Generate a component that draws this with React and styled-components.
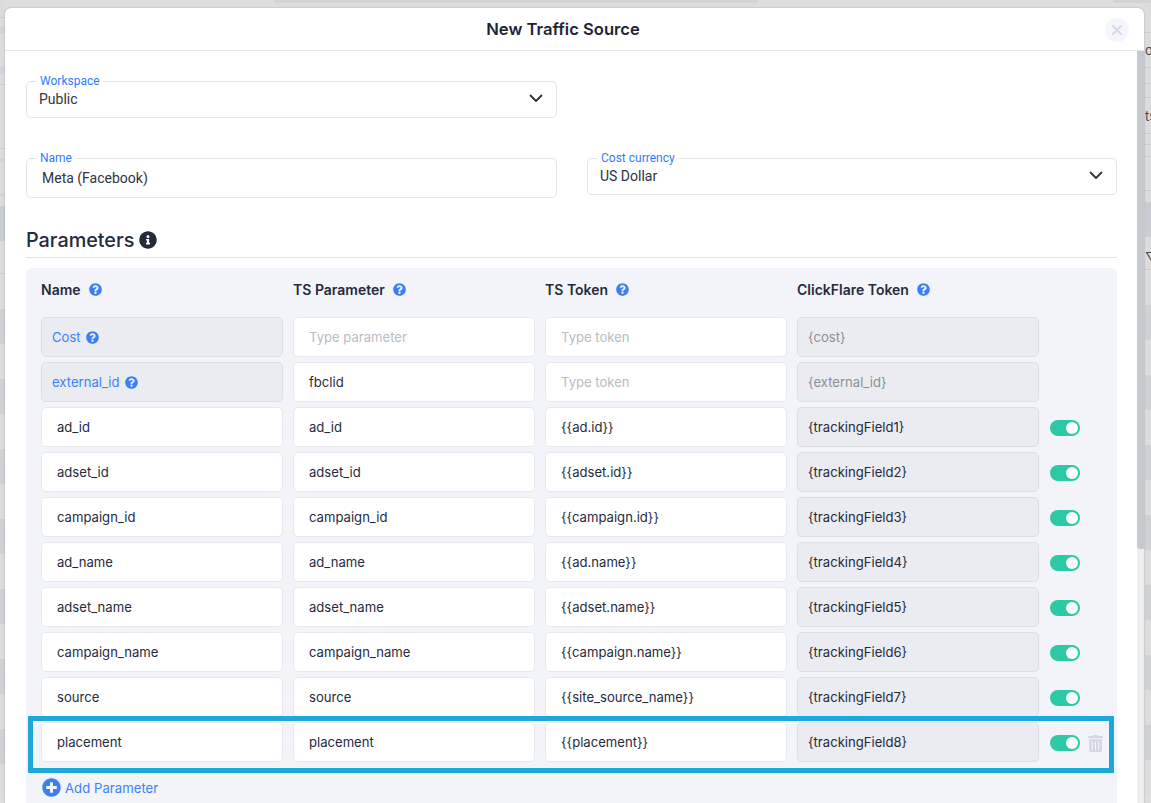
import React from "react";
import styled, { createGlobalStyle } from "styled-components";
import { FaQuestionCircle, FaInfoCircle, FaTrashAlt, FaPlusCircle } from "react-icons/fa";

const Global = createGlobalStyle`
  html, body { margin: 0; padding: 0; height: 100%; overflow: hidden; background: #dedede; }
  * { box-sizing: border-box; }
  body { font-family: Inter, "Noto Sans", sans-serif; color: #252b3b; }
`;

const Page = styled.div`
  position: relative;
  height: 803px;
  padding: 8px 7px 0 5px;
  overflow: hidden;
`;
const Backdrop = styled.div`
  position: absolute;
  inset: 0;
  display: flex;
  justify-content: space-between;
`;
const Strip = styled.div`
  width: 6px;
  overflow: hidden;
`;
const Band = styled.div`
  height: ${p => p.$h}px;
  background: ${p => p.$c || "#dcdcdc"};
  font-size: 13px;
  line-height: ${p => p.$h}px;
  color: #44474d;
  white-space: nowrap;
`;
const TopPill = styled.div`
  position: absolute;
  top: 0;
  left: ${p => p.$left}px;
  width: ${p => p.$w}px;
  height: 3px;
  background: #d3d3d7;
  border-radius: 0 0 6px 6px;
`;
const Modal = styled.div`
  position: relative;
  height: 795px;
  background: #fff;
  border-radius: 6px 6px 0 0;
  display: flex;
  flex-direction: column;
  box-shadow: 0 0 2px rgba(0,0,0,.28);
`;
const Header = styled.header`
  height: 43px;
  flex: none;
  border-bottom: 1px solid #e4e5e7;
  display: flex;
  align-items: center;
  justify-content: center;
  padding-right: 23px;
  position: relative;
`;
const Title = styled.h1`
  margin: 0;
  font-size: 16.6px;
  font-weight: 600;
  color: #1f2537;
`;
const Close = styled.button`
  position: absolute;
  right: 15px;
  top: 10px;
  width: 24px;
  height: 24px;
  border: 0;
  padding: 0;
  border-radius: 50%;
  background: #f5f6fb;
  display: grid;
  place-items: center;
  color: #d6d9e5;
`;
const Scroller = styled.div`
  flex: 1;
  display: flex;
  min-height: 0;
`;
const Body = styled.div`
  flex: 1;
  min-width: 0;
  padding: 30px 20px 0 21px;
`;
const ScrollTrack = styled.div`
  width: 7px;
  flex: none;
  background: #eeeff1;
`;
const ScrollThumb = styled.div`
  width: 8px;
  height: 498px;
  background: #c5c8cc;
  border-radius: 0 0 3px 3px;
`;
const FormGrid = styled.div`
  display: grid;
  grid-template-columns: 531px 530px;
  column-gap: 30px;
  align-items: start;
`;
const FieldBox = styled.div`
  position: relative;
  height: ${p => p.$h}px;
  margin-bottom: ${p => p.$mb || 0}px;
  border: 1px solid #e2e4e8;
  border-radius: 5px;
  display: flex;
  align-items: center;
  justify-content: space-between;
  padding: ${p => p.$pad};
  font-family: Roboto, Inter, sans-serif;
  font-size: 14px;
  color: #30343f;
`;
const FieldLabel = styled.span`
  position: absolute;
  left: 9px;
  top: -7px;
  padding: 0 4px;
  background: #fff;
  font-size: 12px;
  line-height: 13px;
  color: #2f7bff;
`;
const Section = styled.h2`
  margin: 22px 0 0;
  height: 38px;
  border-bottom: 1px solid #e2e4e8;
  display: flex;
  align-items: center;
  gap: 5px;
  font-size: 19.8px;
  font-weight: 500;
  color: #252b3b;
  padding-top: 2px;
`;
const Panel = styled.section`
  position: relative;
  margin-top: 10px;
  background: #f3f4fa;
  border-radius: 6px 6px 0 0;
  padding: 0 15px;
  height: 600px;
`;
const Grid = styled.div`
  display: grid;
  grid-template-columns: repeat(4, 242px) 1fr;
  column-gap: 10px;
  row-gap: 5px;
`;
const Head = styled.div`
  height: 44px;
  display: flex;
  align-items: center;
  gap: 8px;
  font-size: 14px;
  font-weight: 600;
  color: #252b3b;
  padding-bottom: 1px;
`;
const HelpIcon = styled(FaQuestionCircle)`
  width: 13px;
  height: 13px;
  flex: none;
  color: #3b7ff5;
`;
const InfoIcon = styled(FaInfoCircle)`
  width: 18px;
  height: 18px;
  color: #252b3b;
`;
const TrashIcon = styled(FaTrashAlt)`
  width: 15px;
  height: 17px;
  color: #d3d6e6;
`;
const PlusIcon = styled(FaPlusCircle)`
  width: 19px;
  height: 19px;
  color: #3b7ff5;
`;
const Cell = styled.div`
  height: 40px;
  border-radius: 5px;
  border: 1px solid ${p => (p.$disabled ? "#dcdee3" : "#e8e9ee")};
  background: ${p => (p.$disabled ? "#eaecf1" : "#fff")};
  display: flex;
  align-items: center;
  gap: 5px;
  font-size: 13.1px;
  padding-left: ${p => p.$pl || 15}px;
  color: ${p =>
    p.$tone === "blue" ? "#3b82f6" :
    p.$tone === "ph" ? "#b9bcc4" :
    p.$tone === "muted" ? "#8b8f99" : "#252b3b"};
`;
const Controls = styled.div`
  height: 40px;
  display: flex;
  align-items: center;
  gap: 8px;
  padding: 2px 0 0 1px;
`;
const Toggle = styled.span`
  width: 30px;
  height: 16px;
  border-radius: 8px;
  background: #2dc9a4;
  display: flex;
  justify-content: flex-end;
  align-items: center;
  padding-right: 2px;
  &::after {
    content: "";
    width: 12px;
    height: 12px;
    border-radius: 50%;
    background: #fff;
  }
`;
const Highlight = styled.div`
  position: absolute;
  left: 2px;
  top: 448px;
  width: 1086px;
  height: 57px;
  border: 5px solid #1ea7db;
  pointer-events: none;
`;
const AddRow = styled.div`
  display: flex;
  align-items: center;
  gap: 4px;
  margin: 16px 0 0 1px;
  font-size: 13.2px;
  color: #3b82f6;
`;

const Chevron = () => (
  <svg width="14" height="9" viewBox="0 0 14 9" fill="none" stroke="#30343f" strokeWidth="1.8" strokeLinecap="round" strokeLinejoin="round">
    <path d="M1.5 1.5 7 7l5.5-5.5" />
  </svg>
);

const L = "#dcdcdc", LN = "#cbcbcb", B = "#cfd4e0", D = "#c9ccd2", S = "#d0d1d4";
const stripes = [];
for (let i = 0; i < 7; i++) stripes.push([35, S], [35, L]);

const leftBands = [
  [17, L], [1, LN], [9, L], [6, B], [34, L], [7, B], [10, L], [1, LN], [63, L], [1, LN],
  [10, L], [3, B], [31, L], [3, B], [10, L], [35, D], [32, L], [1, LN], [35, L],
  ...stripes,
];
const rightBands = [
  [3, "#d3d3d7"], [29, L], [1, LN], [12, L],
  [10, L, "o"],
  [12, L], [1, LN], [15, L], [1, LN], [13, L], [1, LN], [12, L],
  [12, L, "ts"],
  [11, L], [1, LN], [10, L], [1, LN], [11, L], [1, LN], [33, L], [1, LN], [11, L], [35, D],
  [15, L], [10, L, "▽"], [7, L], [1, LN], [35, L],
  ...stripes,
];

const rows = [
  ["ad_id", "{{ad.id}}"],
  ["adset_id", "{{adset.id}}"],
  ["campaign_id", "{{campaign.id}}"],
  ["ad_name", "{{ad.name}}"],
  ["adset_name", "{{adset.name}}"],
  ["campaign_name", "{{campaign.name}}"],
  ["source", "{{site_source_name}}"],
  ["placement", "{{placement}}"],
];
const heads = ["Name", "TS Parameter", "TS Token", "ClickFlare Token"];

export default function App() {
  return (
    <Page>
      <Global />
      <Backdrop>
        <Strip>
          {leftBands.map(([h, c], i) => <Band key={i} $h={h} $c={c} />)}
        </Strip>
        <TopPill $left={274} $w={484} />
        <TopPill $left={1113} $w={38} />
        <Strip>
          {rightBands.map(([h, c, t], i) => <Band key={i} $h={h} $c={c}>{t}</Band>)}
        </Strip>
      </Backdrop>
      <Modal>
        <Header>
          <Title>New Traffic Source</Title>
          <Close aria-label="Close">
            <svg width="10" height="10" viewBox="0 0 10 10" stroke="currentColor" strokeWidth="2" strokeLinecap="round"><path d="M1 1l8 8M9 1 1 9" /></svg>
          </Close>
        </Header>
        <Scroller>
          <Body>
            <FormGrid>
              <FieldBox $h={37} $mb={40} $pad="0 13px 2px 12px">
                <FieldLabel>Workspace</FieldLabel>
                Public
                <Chevron />
              </FieldBox>
              <div />
              <FieldBox $h={40} $pad="0 13px 0 15px">
                <FieldLabel>Name</FieldLabel>
                Meta (Facebook)
              </FieldBox>
              <FieldBox $h={37} $pad="0 13px 2px 12px">
                <FieldLabel>Cost currency</FieldLabel>
                US Dollar
                <Chevron />
              </FieldBox>
            </FormGrid>
            <Section>Parameters <InfoIcon /></Section>
            <Panel>
              <Grid>
                {heads.map(h => (
                  <Head key={h}>{h} <HelpIcon /></Head>
                ))}
                <div />
                <Cell $disabled $tone="blue" $pl={10}>Cost <HelpIcon /></Cell>
                <Cell $tone="ph">Type parameter</Cell>
                <Cell $tone="ph">Type token</Cell>
                <Cell $disabled $tone="muted" $pl={10}>{"{cost}"}</Cell>
                <div />
                <Cell $disabled $tone="blue" $pl={10}>external_id <HelpIcon /></Cell>
                <Cell>fbclid</Cell>
                <Cell $tone="ph">Type token</Cell>
                <Cell $disabled $tone="muted" $pl={10}>{"{external_id}"}</Cell>
                <div />
                {rows.map(([name, token], i) => (
                  <React.Fragment key={name}>
                    <Cell>{name}</Cell>
                    <Cell>{name}</Cell>
                    <Cell>{token}</Cell>
                    <Cell $disabled $pl={10}>{`{trackingField${i + 1}}`}</Cell>
                    <Controls>
                      <Toggle />
                      {i === rows.length - 1 && <TrashIcon />}
                    </Controls>
                  </React.Fragment>
                ))}
              </Grid>
              <AddRow><PlusIcon /> Add Parameter</AddRow>
              <Highlight />
            </Panel>
          </Body>
          <ScrollTrack><ScrollThumb /></ScrollTrack>
        </Scroller>
      </Modal>
    </Page>
  );
}
